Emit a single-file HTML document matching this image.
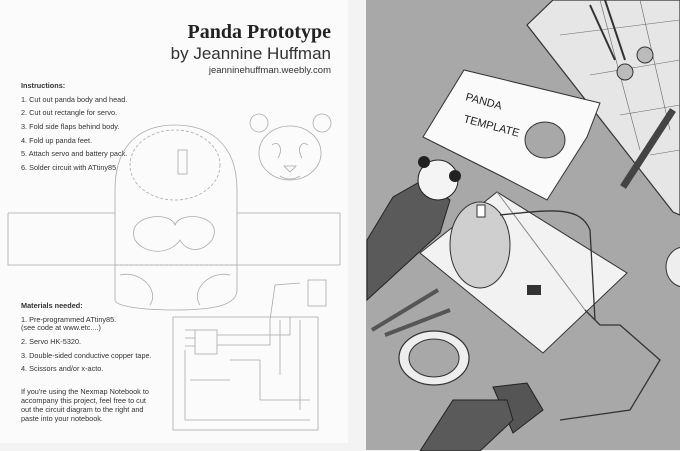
<!DOCTYPE html>
<html><head><meta charset="utf-8"><style>
html,body{margin:0;padding:0;width:680px;height:451px;overflow:hidden;background:#f4f4f4}
svg{position:absolute;left:0;top:0}
.t{font-family:"Liberation Sans",sans-serif;fill:#333}
</style></head><body>
<svg width="680" height="451" viewBox="0 0 680 451">
<rect x="0" y="0" width="680" height="451" fill="#f3f3f3"/>
<rect x="0" y="0" width="348" height="443" fill="#fbfbfb"/>
<text x="331" y="38" text-anchor="end" font-family="Liberation Serif,serif" font-weight="bold" font-size="20" fill="#222">Panda Prototype</text>
<text x="331" y="59" text-anchor="end" class="t" font-size="17" fill="#333">by Jeannine Huffman</text>
<text x="331" y="73" text-anchor="end" class="t" font-size="9.5">jeanninehuffman.weebly.com</text>
<g class="t" font-size="7.3">
<text x="21" y="88" font-weight="bold">Instructions:</text>
<text x="21" y="102">1. Cut out panda body and head.</text>
<text x="21" y="115">2. Cut out rectangle for servo.</text>
<text x="21" y="129">3. Fold side flaps behind body.</text>
<text x="21" y="143">4. Fold up panda feet.</text>
<text x="21" y="156">5. Attach servo and battery pack.</text>
<text x="21" y="170">6. Solder circuit with ATtiny85.</text>
<text x="21" y="308" font-weight="bold">Materials needed:</text>
<text x="21" y="322">1. Pre-programmed ATtiny85.</text>
<text x="21" y="330">(see code at www.etc....)</text>
<text x="21" y="344">2. Servo HK-5320.</text>
<text x="21" y="358">3. Double-sided conductive copper tape.</text>
<text x="21" y="371">4. Scissors and/or x-acto.</text>
<text x="21" y="394">If you're using the Nexmap Notebook to</text>
<text x="21" y="403">accompany this project, feel free to cut</text>
<text x="21" y="412">out the circuit diagram to the right and</text>
<text x="21" y="421">paste into your notebook.</text>
</g>
<g fill="none" stroke="#aaa" stroke-width="0.8">
<path d="M115 300 L115 190 C115 140 145 125 175 125 C205 125 237 140 237 190 L237 290 C237 305 215 310 175 310 C135 310 115 305 115 300Z"/>
<ellipse cx="175" cy="165" rx="45" ry="35" stroke-dasharray="3 2"/>
<rect x="178" y="150" width="9" height="24"/>
<path d="M8 213 L115 213 M8 213 L8 265 L340 265 M237 213 L340 213 L340 265"/>
<path d="M115 265 L237 265" stroke-dasharray="3 2"/>
<path d="M135 240 C125 215 170 210 175 225 C180 210 225 215 212 240 C200 255 185 250 180 240 C170 255 145 255 135 240Z"/>
<path d="M120 275 C140 270 160 290 150 305 M230 275 C210 270 190 290 200 305"/>
<ellipse cx="290" cy="153" rx="31" ry="27"/>
<circle cx="259" cy="123" r="9"/><circle cx="322" cy="123" r="9"/>
<path d="M272 145 C278 140 284 148 278 158 M308 145 C302 140 296 148 302 158 M284 166 L296 166 L290 172Z M280 176 C286 180 294 180 300 176"/>
<rect x="173" y="317" width="145" height="113"/>
<rect x="195" y="330" width="22" height="24"/>
<path d="M185 330 L195 330 M185 338 L195 338 M185 346 L195 346 M217 335 L290 335 L290 317 M217 345 L270 345 L270 320 L275 285 L300 283 M230 360 L260 360 L260 400 L310 400 M185 350 L185 420 L310 420 M280 320 L280 375 M300 320 L300 410 M190 380 L230 380"/>
<rect x="308" y="280" width="18" height="26"/>
</g>
<rect x="366" y="0" width="314" height="450" fill="#a8a8a8"/>
<polygon points="553,0 680,0 680,215 673,212 527,25" fill="#e6e6e6" stroke="#333" stroke-width="1.2"/>
<g stroke="#666" stroke-width="0.6"><path d="M560 35 L680 20 M590 75 L680 60 M620 115 L680 105 M650 155 L680 150 M600 0 L640 150 M640 0 L670 130"/></g>
<path d="M590 5 L615 60 M605 0 L625 60" stroke="#333" stroke-width="2"/>
<circle cx="625" cy="72" r="8" fill="#bbb" stroke="#333"/><circle cx="645" cy="55" r="8" fill="#bbb" stroke="#333"/>
<path d="M673 110 L623 187" stroke="#444" stroke-width="7"/>
<polygon points="423,137 464,70 600,103 587,137 547,200 503,177" fill="#fafafa" stroke="#333" stroke-width="1"/>
<ellipse cx="545" cy="140" rx="20" ry="18" fill="#a8a8a8" stroke="#333"/>
<text x="465" y="100" font-family="Liberation Sans,sans-serif" font-size="11" fill="#222" transform="rotate(15 465 100)">PANDA</text>
<text x="463" y="122" font-family="Liberation Sans,sans-serif" font-size="11" fill="#222" transform="rotate(15 463 122)">TEMPLATE</text>
<polygon points="420,253 497,192 627,273 543,353" fill="#f2f2f2" stroke="#333" stroke-width="1"/>
<path d="M497 192 L585 310" stroke="#888"/>
<ellipse cx="480" cy="245" rx="30" ry="43" fill="#cfcfcf" stroke="#333"/>
<rect x="477" y="205" width="8" height="12" fill="#fff" stroke="#333"/>
<path d="M500 215 C550 210 580 205 590 230 L595 320 M585 310 L600 325 L620 325 L660 360 L630 410 L560 420" fill="none" stroke="#333" stroke-width="1.3"/>
<rect x="527" y="285" width="14" height="10" fill="#333"/>
<ellipse cx="434" cy="358" rx="35" ry="27" fill="#eee" stroke="#333" stroke-width="1.2"/>
<ellipse cx="434" cy="358" rx="25" ry="19" fill="#a8a8a8" stroke="#333"/>
<ellipse cx="684" cy="267" rx="18" ry="20" fill="#eee" stroke="#333"/>
<path d="M372 330 L438 290 M385 335 L450 310" stroke="#555" stroke-width="4"/>
<polygon points="367,240 393,197 423,180 450,200 440,233 367,300" fill="#5a5a5a" stroke="#222"/>
<circle cx="438" cy="180" r="20" fill="#f4f4f4" stroke="#222"/>
<circle cx="424" cy="162" r="6" fill="#222"/><circle cx="455" cy="176" r="6" fill="#222"/>
<polygon points="493,387 527,383 543,410 513,433" fill="#555" stroke="#222"/>
<polygon points="420,451 453,400 507,400 513,420 480,451" fill="#5a5a5a" stroke="#222"/>
</svg>
</body></html>
